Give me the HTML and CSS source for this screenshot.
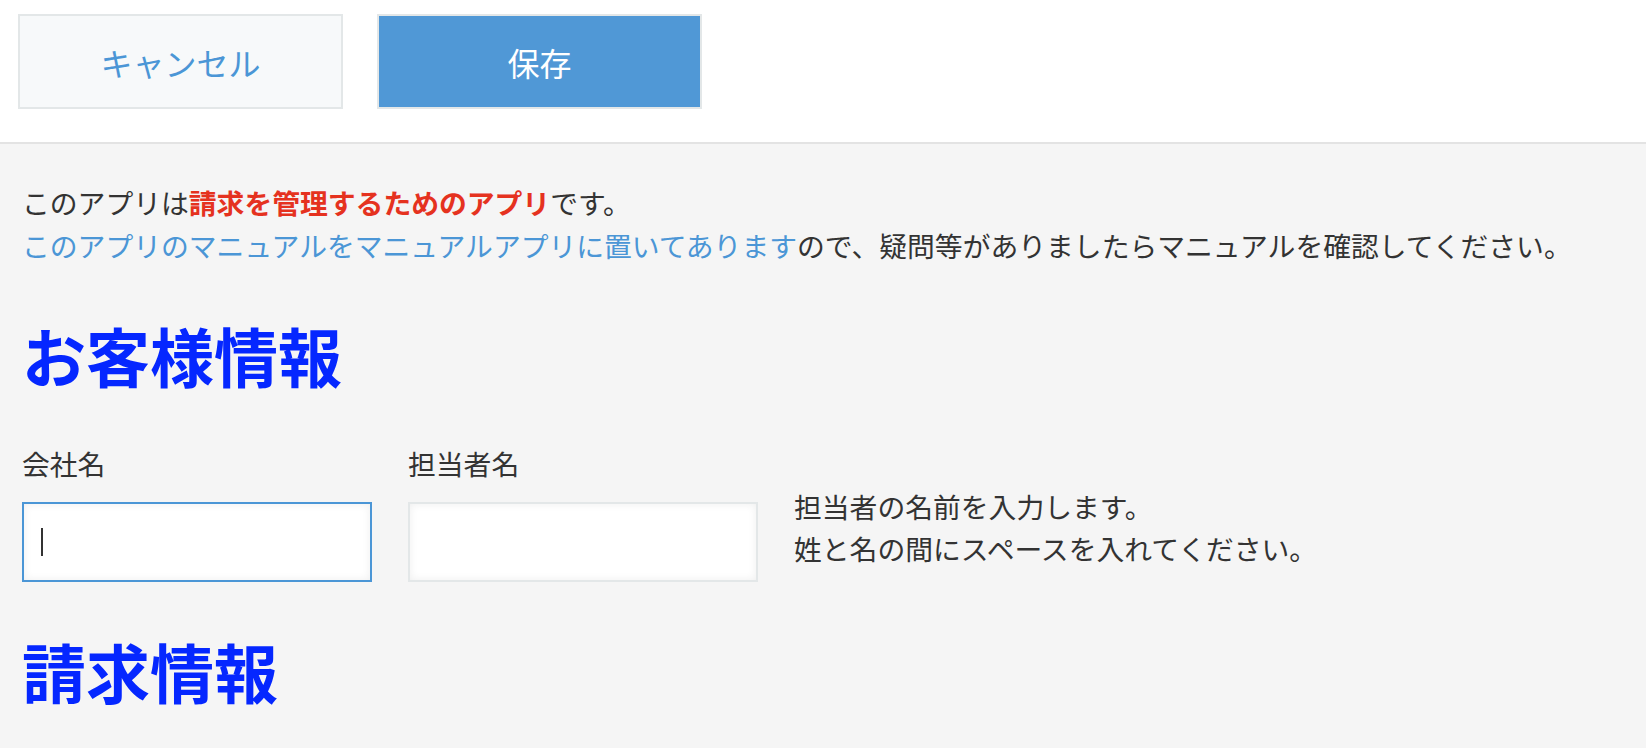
FILE: index.html
```html
<!DOCTYPE html>
<html lang="ja">
  <head>
    <meta charset="UTF-8">
    <meta name="viewport" content="width=device-width, initial-scale=1">
    <title>請求管理アプリ</title>
    <link rel="stylesheet" href="styles.css">
  </head>
  <body>
    <header class="toolbar">
      <button class="btn btn-cancel" type="button">キャンセル</button>
      <button class="btn btn-save" type="button">保存</button>
    </header>
    <main class="content">
      <p class="intro">
        このアプリは<b class="alert">請求を管理するためのアプリ</b>です。<br>
        <a class="link" href="#">このアプリのマニュアルをマニュアルアプリに置いてあります</a>ので、疑問等がありましたらマニュアルを確認してください。
      </p>
      <h1 class="section-title">お客様情報</h1>
      <div class="field-row">
        <div class="field">
          <label class="field-label" for="company">会社名</label>
          <div class="input-wrap">
            <input class="text-input is-focused" id="company" type="text">
            <span class="caret"></span>
          </div>
        </div>
        <div class="field">
          <label class="field-label" for="person">担当者名</label>
          <div class="input-wrap">
            <input class="text-input" id="person" type="text">
          </div>
        </div>
        <div class="field-help">
          担当者の名前を入力します。<br>
          姓と名の間にスペースを入れてください。
        </div>
      </div>
      <h1 class="section-title">請求情報</h1>
    </main>
  </body>
</html>
```

FILE: styles.css
```css
body {
  margin: 0;
  padding: 0;
  background-color: #f5f5f5;
  font-family: "Noto Sans CJK JP", sans-serif;
  color: #333;
  font-size: 27.8px;
}
.toolbar {
  display: flex;
  gap: 34px;
  height: 144px;
  box-sizing: border-box;
  padding: 14px 18px 0;
  background: white;
  border-bottom: 2px solid #e3e3e3;
}
.btn {
  width: 325px;
  height: 95px;
  border: 2px solid #e3e7e8;
  font-family: "Noto Sans CJK JP", sans-serif;
  font-size: 32px;
  cursor: pointer;
}
.btn-cancel {
  background: #f7f9fa;
  color: #4b96d6;
}
.btn-save {
  background: #5098d6;
  color: white;
}
.content {
  padding: 0 22px;
}
.intro {
  margin: 37px 0 0;
  line-height: 43px;
}
.alert {
  color: #e5321f;
  font-weight: bold;
}
.link {
  color: #4b96d6;
  text-decoration: none;
}
.section-title {
  margin: 0;
  font-size: 64px;
  line-height: 80px;
  font-weight: bold;
  color: #0527ff;
}
.intro + .section-title {
  margin-top: 47px;
}
.field-row + .section-title {
  margin-top: 48px;
}
.field-row {
  display: flex;
  gap: 36px;
  margin-top: 49px;
}
.field {
  display: flex;
  flex-direction: column;
  gap: 19px;
}
.field-label {
  line-height: 40px;
}
.input-wrap {
  position: relative;
}
.text-input {
  display: block;
  width: 350px;
  height: 80px;
  box-sizing: border-box;
  margin: 0;
  padding: 0 18px;
  border: 2px solid #e3e7e8;
  background: white;
  box-shadow: inset 0 0 8px rgba(0, 0, 0, 0.07);
  font-family: "Noto Sans CJK JP", sans-serif;
  font-size: 27.8px;
  outline: none;
}
.text-input.is-focused {
  border-color: #4b96d6;
}
.caret {
  position: absolute;
  left: 19px;
  top: 26px;
  width: 2px;
  height: 28px;
  background: #333;
}
.field-help {
  margin: 42px 0 0;
  line-height: 42px;
}
```
